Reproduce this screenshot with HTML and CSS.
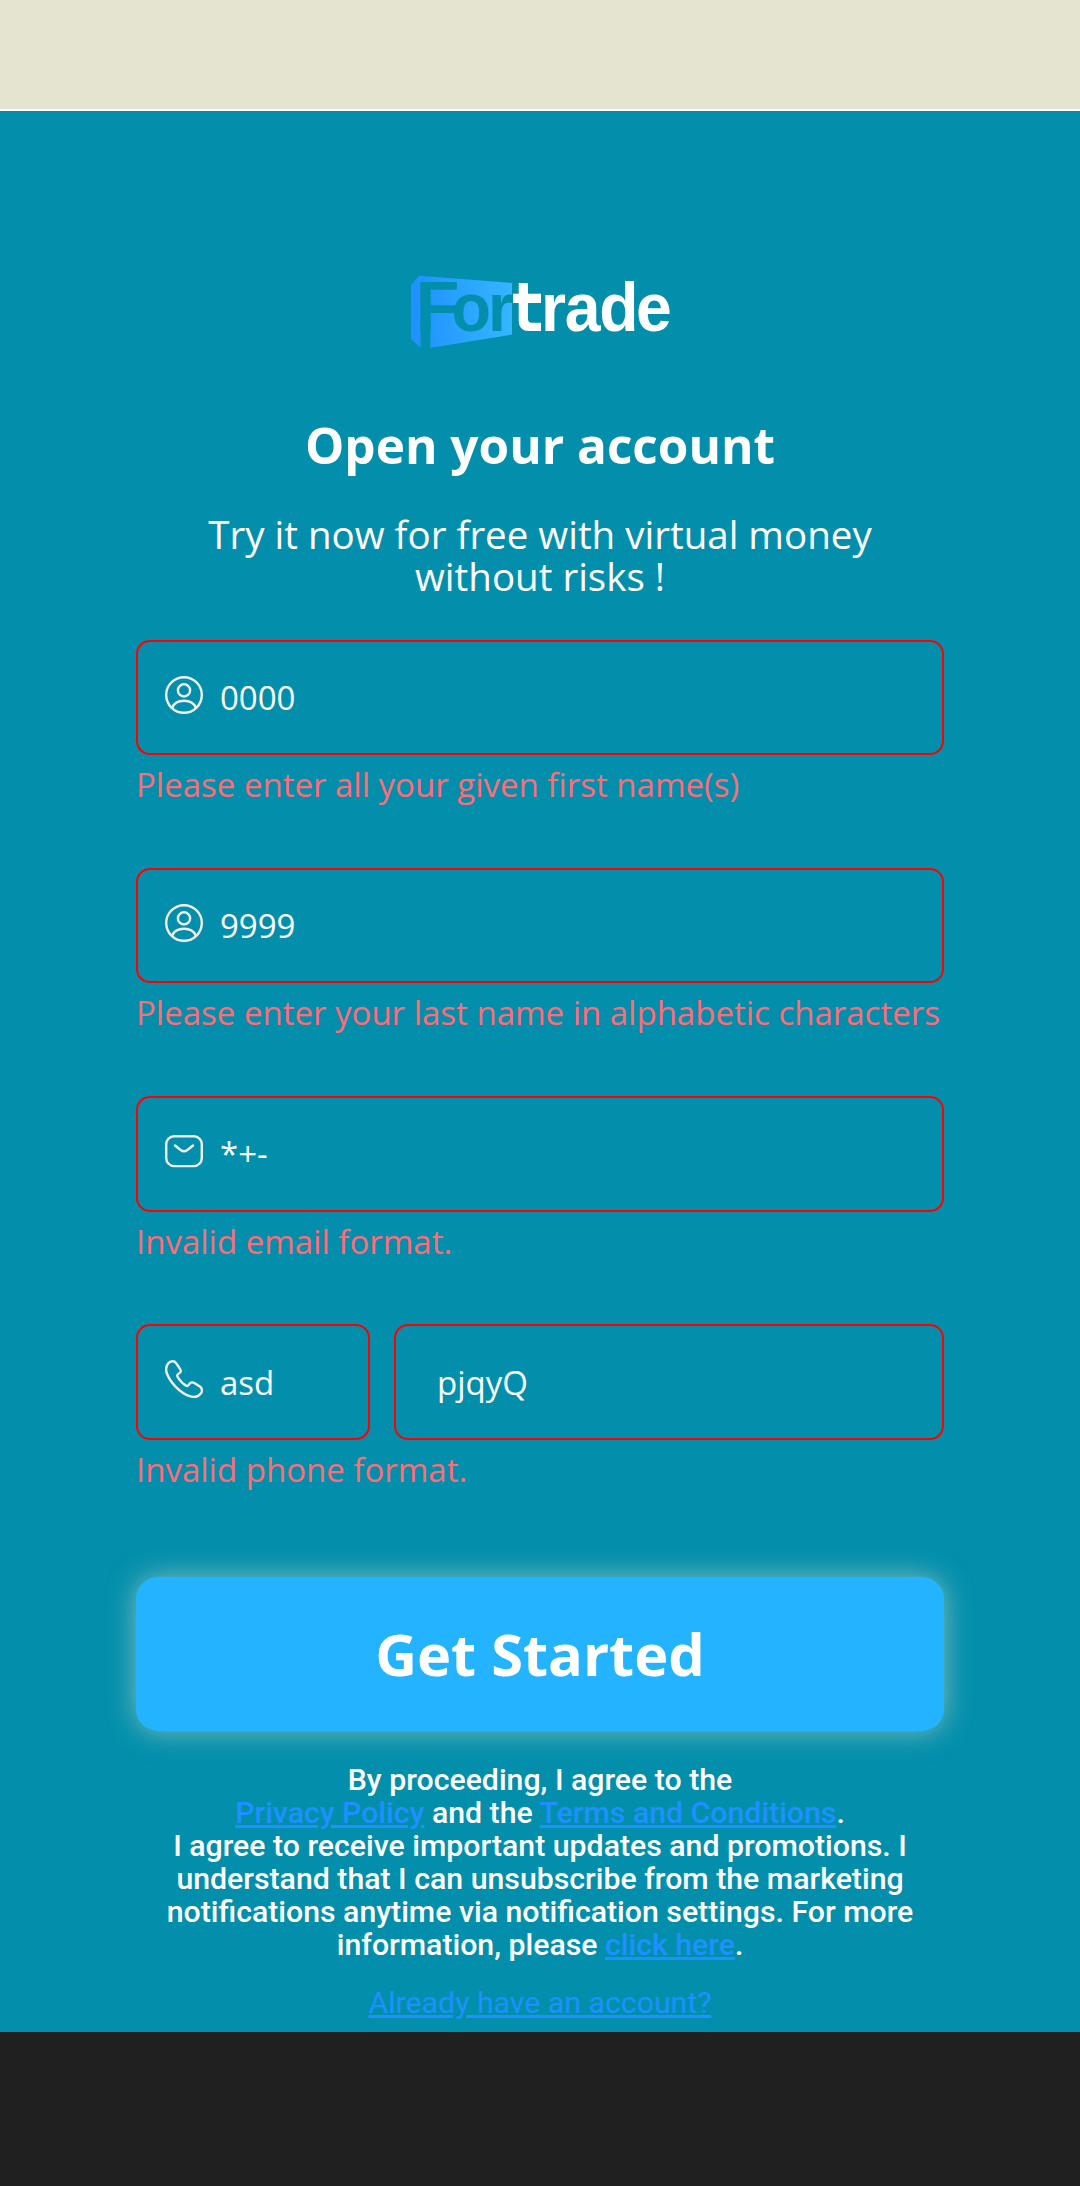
FILE: index.html
```html
<!DOCTYPE html>
<html lang="en">
<head>
<meta charset="utf-8">
<title>Fortrade - Open your account</title>
<link rel="stylesheet" href="styles.css">
</head>
<body>
<svg class="sprite" aria-hidden="true">
  <symbol id="icon-user" viewBox="0 0 38 38">
    <circle cx="19" cy="19" r="17.8"/>
    <circle cx="19" cy="14.4" r="6.1"/>
    <path d="M7.200 31.600C9 27 13.600 24.700 19 24.700S29 27 30.800 31.600"/>
  </symbol>
  <symbol id="icon-mail" viewBox="0 0 38 38">
    <rect x="1.200" y="4.300" width="35.600" height="29.800" rx="8"/>
    <path d="M10 13.500l5.600 4.500q3.400 2.600 6.800 0l5.600-4.500"/>
  </symbol>
  <symbol id="icon-phone" viewBox="0 0 38 38">
    <path d="M3.300 3.300C5.500 .6 9.300 .5 11.200 3.200L15 8.800C16.500 11 15.800 12.600 13.500 13.800C11.800 14.800 12 16 13 17.600C15 20.600 18.500 24.300 21 25.600C22.600 26.400 23.300 25.800 24 24.500C25.200 22.300 27.300 21.800 29.300 23.100L34.800 26.600C37.500 28.500 37.600 31.400 35.600 33.800C33 37 28.300 37.600 24 35.900C15 32.500 5.600 23 2.100 14C.5 10 .7 6.400 3.300 3.300Z"/>
  </symbol>
</svg>
<div class="topbar"></div>
<main class="signup">
  <svg class="logo" viewBox="0 0 300 100" role="img" aria-label="Fortrade">
    <defs>
      <linearGradient id="panel" x1="0" x2="1" y1="0" y2="0">
        <stop offset="0" stop-color="#1e90ff"/>
        <stop offset="1" stop-color="#35b6ff"/>
      </linearGradient>
    </defs>
    <path fill="url(#panel)" d="M29.300 15.700L122 23V74.600L40.700 87.700H30.300L21 79V25Z"/>
    <g class="logo-front">
      <text transform="translate(25.500 71) scale(1.060 1.030)">F</text>
      <rect x="30.500" y="60" width="9.900" height="29"/>
      <text transform="translate(61.500 71) scale(.950 1)">o</text>
      <text transform="translate(98 71) scale(.950 1)">r</text>
    </g>
    <g class="logo-back">
      <rect x="123" y="33.700" width="28" height="9.300"/>
      <path d="M128.700 23H138V59q0 3.700 3.700 3.700H151V71H139q-10.300 0-10.300-10.300Z"/>
      <text transform="scale(.945 1)" y="71" x="159.700 185 221.300 260.200">rade</text>
    </g>
  </svg>
  <h1 class="title">Open your account</h1>
  <p class="subtitle">Try it now for free with virtual money without risks !</p>
  <form class="form">
    <div class="group">
      <div class="field"><svg class="icon"><use href="#icon-user"/></svg><span>0000</span></div>
      <p class="error">Please enter all your given first name(s)</p>
    </div>
    <div class="group">
      <div class="field"><svg class="icon"><use href="#icon-user"/></svg><span>9999</span></div>
      <p class="error">Please enter your last name in alphabetic characters</p>
    </div>
    <div class="group">
      <div class="field"><svg class="icon"><use href="#icon-mail"/></svg><span>*+-</span></div>
      <p class="error">Invalid email format.</p>
    </div>
    <div class="group">
      <div class="phone-row">
        <div class="field"><svg class="icon"><use href="#icon-phone"/></svg><span>asd</span></div>
        <div class="field field-number"><span>pjqyQ</span></div>
      </div>
      <p class="error">Invalid phone format.</p>
    </div>
    <button class="submit" type="button">Get Started</button>
  </form>
  <p class="legal">By proceeding, I agree to the<br><a href="#">Privacy Policy</a> and the <a href="#">Terms and Conditions</a>.<br>I agree to receive important updates and promotions. I understand that I can unsubscribe from the marketing notifications anytime via notification settings. For more information, please <a href="#">click here</a>.</p>
  <p class="login"><a href="#">Already have an account?</a></p>
</main>
</body>
</html>
```
FILE: styles.css
```css
* {
  box-sizing: border-box;
}

body {
  margin: 0;
  min-height: 2186px;
  background: #202020;
  font-family: "Open Sans", sans-serif;
  font-size: 27.5px;
  color: #fff;
}

h1, p {
  margin: 0;
}

a {
  color: #1e90ff;
}

.sprite {
  display: none;
}

.topbar {
  height: 111px;
  background: #e4e4d0;
  border-bottom: 2px solid #fff;
}

.signup {
  display: flex;
  flex-direction: column;
  align-items: center;
  height: 1921px;
  padding: 149px 136px 0;
  background: #038fac;
  text-align: center;
}

.logo {
  flex: none;
  width: 300px;
  height: 100px;
}

.logo text {
  font: 700 68px "Liberation Sans", sans-serif;
}

.logo-front {
  fill: #038fac;
}

.logo-back {
  fill: #fff;
}

.title {
  margin-top: 55px;
  font-size: 49.5px;
  line-height: 60px;
}

.subtitle {
  width: 700px;
  margin-top: 38px;
  font-size: 38.5px;
  line-height: 42px;
}

.form {
  width: 100%;
  margin-top: 42.6px;
}

.group {
  height: 228.2px;
}

.field {
  display: flex;
  align-items: center;
  gap: 17px;
  height: 115.6px;
  padding-left: 27px;
  border: 2px solid #f00;
  border-radius: 14px;
  font-size: 33px;
}

.field-number {
  padding-left: 41px;
}

.phone-row {
  display: grid;
  grid-template-columns: 234px 1fr;
  gap: 24px;
}

.phone-row .field {
  padding-top: 1px;
}

.icon {
  width: 38px;
  height: 38px;
  margin-bottom: 5px;
  fill: none;
  stroke: #f0f0f0;
  stroke-width: 2.4;
  stroke-linecap: round;
}

.phone-row .icon {
  margin-bottom: 7px;
}

.error {
  margin-top: 12px;
  font-size: 33px;
  line-height: 36px;
  text-align: left;
  white-space: nowrap;
  color: #ff6b76;
}

.submit {
  display: block;
  width: 100%;
  height: 154px;
  margin-top: 24.6px;
  padding: 0 0 1px;
  border: 0;
  border-radius: 22px;
  background: #24b4ff;
  box-shadow: 0 0 28px rgba(228, 228, 208, 0.55);
  font: 700 57.75px "Open Sans", sans-serif;
  color: #fff;
}

.legal {
  width: 756px;
  margin-top: 32px;
  font: 500 30.25px/33px Roboto, sans-serif;
}

.login {
  margin-top: 25px;
  font: 400 30.25px/33px Roboto, sans-serif;
}
```
